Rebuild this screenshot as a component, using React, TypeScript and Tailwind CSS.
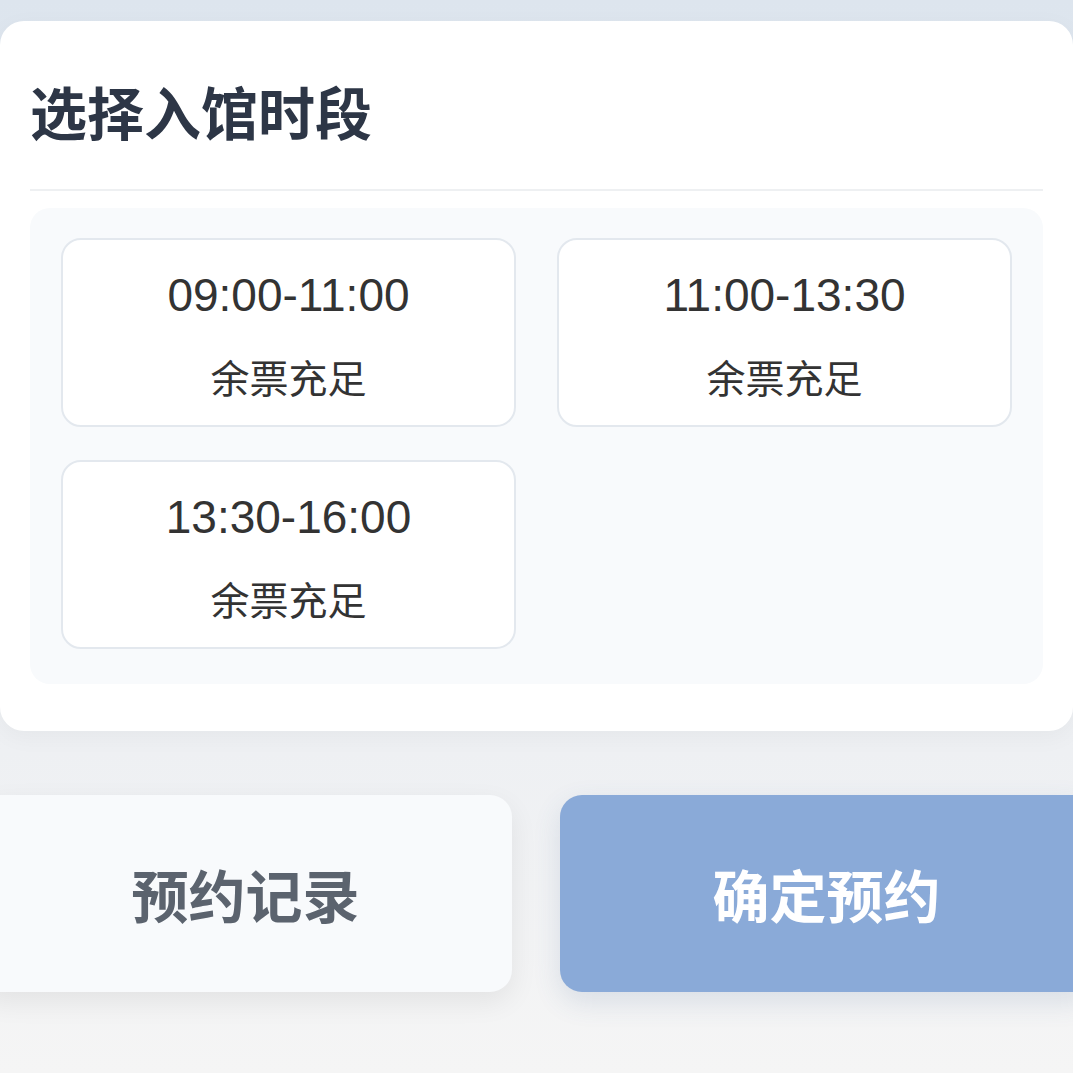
import React from "react";

const slots = [
  { time: "09:00-11:00", status: "余票充足" },
  { time: "11:00-13:30", status: "余票充足" },
  { time: "13:30-16:00", status: "余票充足" },
];

export default function App() {
  return (
    <div className="h-[1073px] w-[1073px] overflow-hidden bg-[linear-gradient(to_bottom,#dde5ee_0%,#eef0f3_70%,#f5f5f5_100%)] pt-[21px] font-['Noto_Sans_CJK_SC',sans-serif]">
      <div className="rounded-[24px] bg-white px-[30px] pt-[61px] pb-[47px] shadow-[0_6px_24px_rgba(0,0,0,0.04)]">
        <h1 className="text-[57px] font-bold leading-none text-[#2d3646]">选择入馆时段</h1>
        <div className="mt-[50px] h-[2px] bg-[#eef0f2]" />
        <div className="mt-[17px] grid grid-cols-2 gap-x-[41px] gap-y-[33px] rounded-[20px] bg-[#f8fafc] px-[31px] pt-[30px] pb-[35px]">
          {slots.map((s) => (
            <div
              key={s.time}
              className="flex h-[189px] flex-col items-center rounded-[20px] border-2 border-[#e3e8ee] bg-white pt-[32px]"
            >
              <div className="font-['Liberation_Sans',sans-serif] text-[46px] leading-none text-[#333333]">
                {s.time}
              </div>
              <div className="mt-[39px] text-[39px] leading-none text-[#333333]">{s.status}</div>
            </div>
          ))}
        </div>
      </div>
      <div className="mt-[64px] ml-[-21px] mr-[-20px] flex gap-[48px]">
        <button className="flex h-[197px] flex-1 items-center justify-center rounded-[22px] bg-[#f8fafc] text-[57px] font-bold leading-none text-[#5b636e] shadow-[0_10px_28px_rgba(0,0,0,0.07)]">
          预约记录
        </button>
        <button className="flex h-[197px] flex-1 items-center justify-center rounded-[22px] bg-[#8aaad8] text-[57px] font-bold leading-none text-white shadow-[0_10px_28px_rgba(60,90,140,0.14)]">
          确定预约
        </button>
      </div>
    </div>
  );
}
